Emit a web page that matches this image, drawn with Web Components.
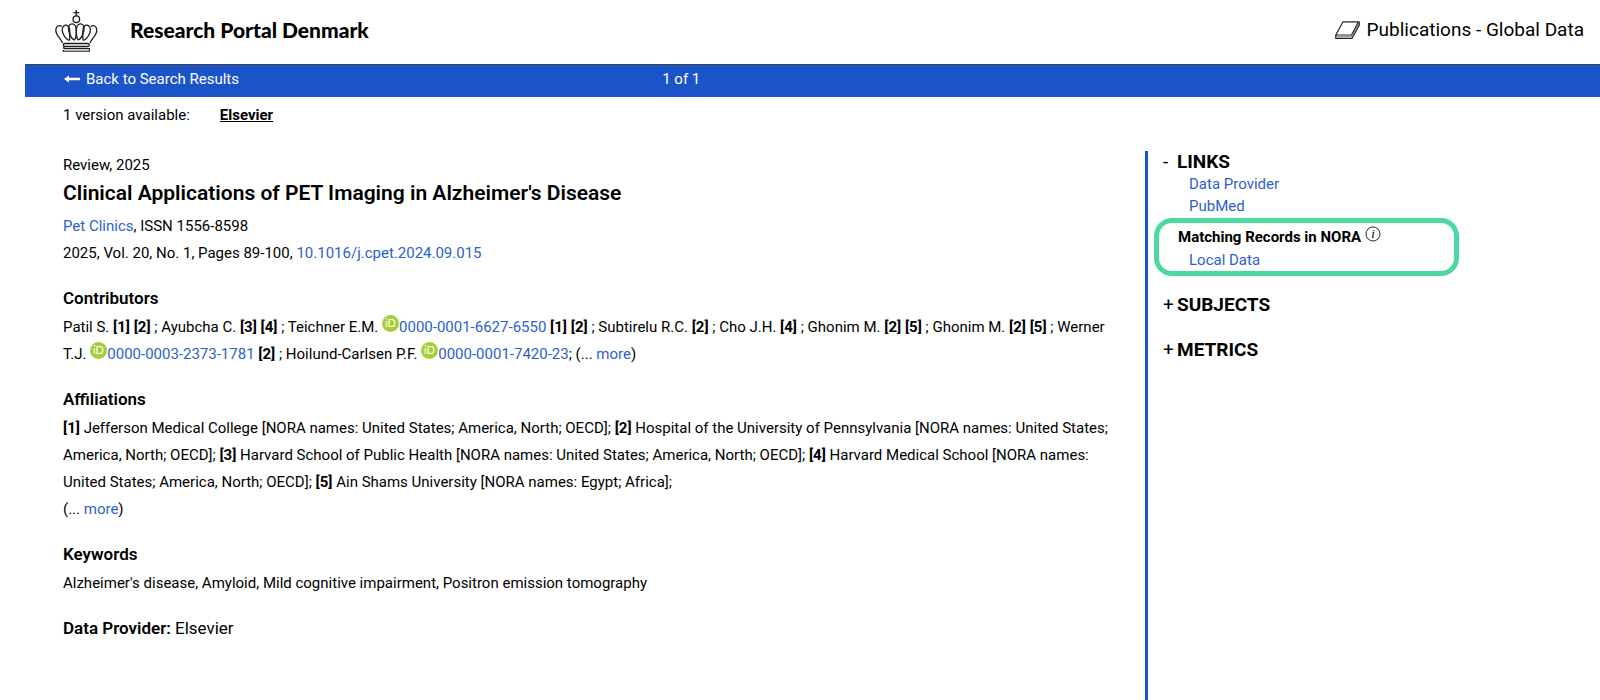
<!DOCTYPE html>
<html lang="en">
<head>
<meta charset="utf-8">
<title>Research Portal Denmark</title>
<style>
  body {
    margin: 0;
    background: #fff;
    color: #000;
    font: 15px/22px Roboto, "Liberation Sans", sans-serif;
    --blue: #1a54c8;
    --link: #2b62cc;
    --green: #4dd8a0;
  }
  b { font-weight: 700; }
  a { color: var(--link); text-decoration: none; }
</style>
</head>
<body>
<portal-page>
  <portal-header slot="header" area="Publications - Global Data">Research Portal Denmark</portal-header>
  <result-bar slot="header" position="1 of 1">Back to Search Results</result-bar>
  <version-bar slot="header" label="1 version available:">Elsevier</version-bar>

  <record-title kind="Review, 2025" heading="Clinical Applications of PET Imaging in Alzheimer's Disease">
    <div><a href="#">Pet Clinics</a>, ISSN 1556-8598</div>
    <div>2025, Vol. 20, No. 1, Pages 89-100, <a href="#">10.1016/j.cpet.2024.09.015</a></div>
  </record-title>

  <record-section heading="Contributors">Patil S. <b>[1]</b> <b>[2]</b> ; Ayubcha C. <b>[3]</b> <b>[4]</b> ; Teichner E.M. <orcid-link>0000-0001-6627-6550</orcid-link> <b>[1]</b> <b>[2]</b> ; Subtirelu R.C. <b>[2]</b> ; Cho J.H. <b>[4]</b> ; Ghonim M. <b>[2]</b> <b>[5]</b> ; Ghonim M. <b>[2]</b> <b>[5]</b> ; Werner T.J. <orcid-link>0000-0003-2373-1781</orcid-link> <b>[2]</b> ; Hoilund-Carlsen P.F. <orcid-link>0000-0001-7420-23</orcid-link>; (... <a href="#">more</a>)</record-section>

  <record-section heading="Affiliations"><b>[1]</b> Jefferson Medical College [NORA names: United States; America, North; OECD]; <b>[2]</b> Hospital of the University of Pennsylvania [NORA names: United States; America, North; OECD]; <b>[3]</b> Harvard School of Public Health [NORA names: United States; America, North; OECD]; <b>[4]</b> Harvard Medical School [NORA names: United States; America, North; OECD]; <b>[5]</b> Ain Shams University [NORA names: Egypt; Africa];<br>(... <a href="#">more</a>)</record-section>

  <record-section heading="Keywords">Alzheimer's disease, Amyloid, Mild cognitive impairment, Positron emission tomography</record-section>

  <record-section heading="Data Provider:" inline>Elsevier</record-section>

  <side-group slot="side" heading="LINKS" open>
    <side-link>Data Provider</side-link>
    <side-link>PubMed</side-link>
    <match-box slot="extra" heading="Matching Records in NORA">
      <side-link>Local Data</side-link>
    </match-box>
  </side-group>
  <side-group slot="side" heading="SUBJECTS"></side-group>
  <side-group slot="side" heading="METRICS"></side-group>
</portal-page>

<script>
// Small base class: fills the shadow root from the element's view()
class PortalElement extends HTMLElement {
  constructor() {
    super();
    this.root = this.attachShadow({ mode: "open" });
  }

  connectedCallback() {
    const template = document.createElement("template");
    template.innerHTML = this.view().trim();
    this.root.replaceChildren(template.content.cloneNode(true));
  }

  attr(name) {
    return this.getAttribute(name) || "";
  }
}

class PortalPage extends PortalElement {
  view() {
    return `
      <style>
        :host { display: flex; flex-direction: column; min-height: 100vh; }
        main {
          flex: 1;
          display: grid;
          grid-template-columns: minmax(0, 32fr) minmax(0, 13fr);
          margin: 25px 0 0 25px;
        }
        article { padding: 3px 30px 32px 38px; display: flex; flex-direction: column; gap: 19px; }
        aside {
          border-left: 3px solid var(--blue);
          display: flex;
          flex-direction: column;
          gap: 23px;
          padding-bottom: 24px;
        }
        ::slotted(side-group[open]) { margin-bottom: -5px; }
      </style>
      <slot name="header"></slot>
      <main>
        <article><slot></slot></article>
        <aside><slot name="side"></slot></aside>
      </main>
    `;
  }
}

class PortalHeader extends PortalElement {
  view() {
    return `
      <style>
        :host { display: block; }
        header {
          display: flex;
          align-items: center;
          justify-content: space-between;
          height: 64px;
          padding: 0 16px 4px 55px;
          box-sizing: border-box;
        }
        .brand { display: flex; align-items: center; gap: 32px; }
        h1 { margin: 0; font: 900 21px/24px Lato, sans-serif; }
        .area { display: flex; align-items: center; gap: 7px; font-size: 19px; line-height: 24px; }
        svg { display: block; }
      </style>
      <header>
        <div class="brand">
          <svg width="43" height="43" viewBox="0 -1 43 43" fill="none" stroke="#1c1c1c" stroke-width="1.3" aria-hidden="true">
            <path d="M21.300 0v6M18.500 2.700h5.600"/>
            <circle cx="21.300" cy="9.200" r="3.300"/>
            <path d="M7.500 33C6 28 1 26 0.800 20.500C0.800 16 4 14.500 7 16.500"/>
            <path d="M35.100 33C36.600 28 41.600 26 41.800 20.500C41.800 16 38.600 14.500 35.600 16.500"/>
            <path d="M14.500 30.500C10 29 5.500 21 8 17C9.500 14 13.500 14.500 14.500 19C15.300 23 15 27 14.500 30.500"/>
            <path d="M28.100 30.500C32.600 29 37.100 21 34.600 17C33.100 14 29.100 14.500 28.100 19C27.300 23 27.600 27 28.100 30.500"/>
            <path d="M13.500 17C14.500 13.500 18.500 12.500 20.500 16C22 20 21.500 27 19.500 30C16 29 13 21 13.500 17"/>
            <path d="M29.100 17C28.100 13.500 24.100 12.500 22.100 16C20.600 20 21.100 27 23.100 30C26.600 29 29.600 21 29.100 17"/>
            <rect x="8.300" y="33.500" width="26" height="3" rx="1.500"/>
            <path d="M9.800 36.500C8.300 37 8.300 38.700 9.800 38.700H34.300V41.200H8.300V40"/>
            <path d="M9 40h25" stroke="#ccc"/>
          </svg>
          <h1><slot></slot></h1>
        </div>
        <div class="area">
          <svg width="25" height="19" viewBox="0 0 25 19" fill="none" stroke="#222" stroke-width="1.200" aria-hidden="true">
            <path d="M8 0.800H23.500L16.500 14H0.800z"/>
            <path d="M0.800 14v3.500H17L24.300 4V0.800"/>
            <path d="M1 15.800H16.800L24 2.500" stroke="#777"/>
          </svg>
          <span>${this.attr("area")}</span>
        </div>
      </header>
    `;
  }
}

class ResultBar extends PortalElement {
  view() {
    return `
      <style>
        :host { display: block; margin-left: 25px; }
        nav {
          display: grid;
          grid-template-columns: 4fr 2fr 6fr;
          padding: 3px 0 7px;
          border-top: 1px solid #444;
          background: var(--blue);
          color: #fff;
        }
        a { display: flex; align-items: center; gap: 6px; padding-left: 39px; color: inherit; text-decoration: none; }
        .position { text-align: center; }
      </style>
      <nav>
        <a href="#">
          <svg width="16" height="8" viewBox="0 0 16 8" fill="#fff" aria-hidden="true">
            <path d="M0 4L5 0.500V2.800H16V5.200H5V7.500z"/>
          </svg>
          <slot></slot>
        </a>
        <span class="position">${this.attr("position")}</span>
      </nav>
    `;
  }
}

class VersionBar extends PortalElement {
  view() {
    return `
      <style>
        :host { display: flex; gap: 30px; margin: 7px 0 0 63px; }
        a { color: #000; font-weight: 700; text-decoration: underline; }
      </style>
      <span>${this.attr("label")}</span>
      <a href="#"><slot></slot></a>
    `;
  }
}

class RecordTitle extends PortalElement {
  view() {
    return `
      <style>
        :host { display: block; line-height: 27px; }
        p { margin: 0; line-height: 22px; }
        h2 { margin: 4px 0 7px; font-size: 21px; line-height: 26px; font-weight: 600; }
      </style>
      <p>${this.attr("kind")}</p>
      <h2>${this.attr("heading")}</h2>
      <slot></slot>
    `;
  }
}

class RecordSection extends PortalElement {
  view() {
    return `
      <style>
        :host { display: block; }
        h3 { margin: 0 0 4px; font-size: 17px; line-height: 24px; font-weight: 600; }
        div { line-height: 27px; }
        :host([inline]) { display: flex; gap: 4px; font-size: 17px; }
        :host([inline]) h3 { margin: 0; }
        :host([inline]) div { line-height: 24px; }
      </style>
      <h3>${this.attr("heading")}</h3>
      <div><slot></slot></div>
    `;
  }
}

class OrcidLink extends PortalElement {
  view() {
    return `
      <style>
        :host { display: inline; }
        a { color: var(--link); text-decoration: none; white-space: nowrap; }
        svg { vertical-align: baseline; }
        text { font: 11px Lato, sans-serif; fill: #fff; }
      </style>
      <a href="#"><svg width="17" height="17" viewBox="0 0 17 17" aria-hidden="true"><circle cx="8.500" cy="8.500" r="8.500" fill="#a6ce39"/><text x="8.500" y="12" text-anchor="middle">iD</text></svg><slot></slot></a>
    `;
  }
}

class SideGroup extends PortalElement {
  static get observedAttributes() {
    return ["open"];
  }

  view() {
    return `
      <style>
        :host { display: block; }
        h2 { margin: 0; font-size: 19px; line-height: 22px; font-weight: 700; }
        button {
          display: flex;
          padding: 0 0 0 15px;
          border: 0;
          background: none;
          color: inherit;
          font: inherit;
          cursor: pointer;
        }
        .mark { width: 14px; text-align: left; font-weight: 400; }
        .links { padding: 0 0 1px 41px; }
      </style>
      <h2><button aria-expanded="false"><span class="mark"></span><span>${this.attr("heading")}</span></button></h2>
      <div class="body">
        <div class="links"><slot></slot></div>
        <slot name="extra"></slot>
      </div>
    `;
  }

  connectedCallback() {
    super.connectedCallback();
    this.button = this.root.querySelector("button");
    this.button.addEventListener("click", e => this.toggleAttribute("open"));
    this.update();
  }

  attributeChangedCallback() {
    if (this.button) this.update();
  }

  update() {
    const open = this.hasAttribute("open");
    this.button.setAttribute("aria-expanded", open);
    this.root.querySelector(".mark").textContent = open ? "-" : "+";
    this.root.querySelector(".body").hidden = !open;
  }
}

class SideLink extends PortalElement {
  view() {
    return `
      <style>
        :host { display: block; }
        a { color: var(--link); text-decoration: none; }
      </style>
      <a href="#"><slot></slot></a>
    `;
  }
}

class MatchBox extends PortalElement {
  view() {
    return `
      <style>
        :host {
          display: block;
          box-sizing: border-box;
          max-width: 305px;
          margin-left: 6px;
          padding: 3px 10px 0 19px;
          border: 5px solid var(--green);
          border-radius: 18px;
        }
        h3 { display: flex; gap: 4px; margin: 0; padding-bottom: 1px; font-size: 15px; line-height: 22px; font-weight: 700; }
        text { font: italic 13px "Liberation Serif", serif; fill: #000; }
        div { padding-left: 11px; }
      </style>
      <h3>
        <span>${this.attr("heading")}</span>
        <svg width="16" height="16" viewBox="0 0 16 16" aria-hidden="true">
          <circle cx="8" cy="8" r="7" fill="none" stroke="#222"/>
          <text x="8" y="12" text-anchor="middle">i</text>
        </svg>
      </h3>
      <div><slot></slot></div>
    `;
  }
}

customElements.define("portal-page", PortalPage);
customElements.define("portal-header", PortalHeader);
customElements.define("result-bar", ResultBar);
customElements.define("version-bar", VersionBar);
customElements.define("record-title", RecordTitle);
customElements.define("record-section", RecordSection);
customElements.define("orcid-link", OrcidLink);
customElements.define("side-group", SideGroup);
customElements.define("side-link", SideLink);
customElements.define("match-box", MatchBox);
</script>
</body>
</html>
